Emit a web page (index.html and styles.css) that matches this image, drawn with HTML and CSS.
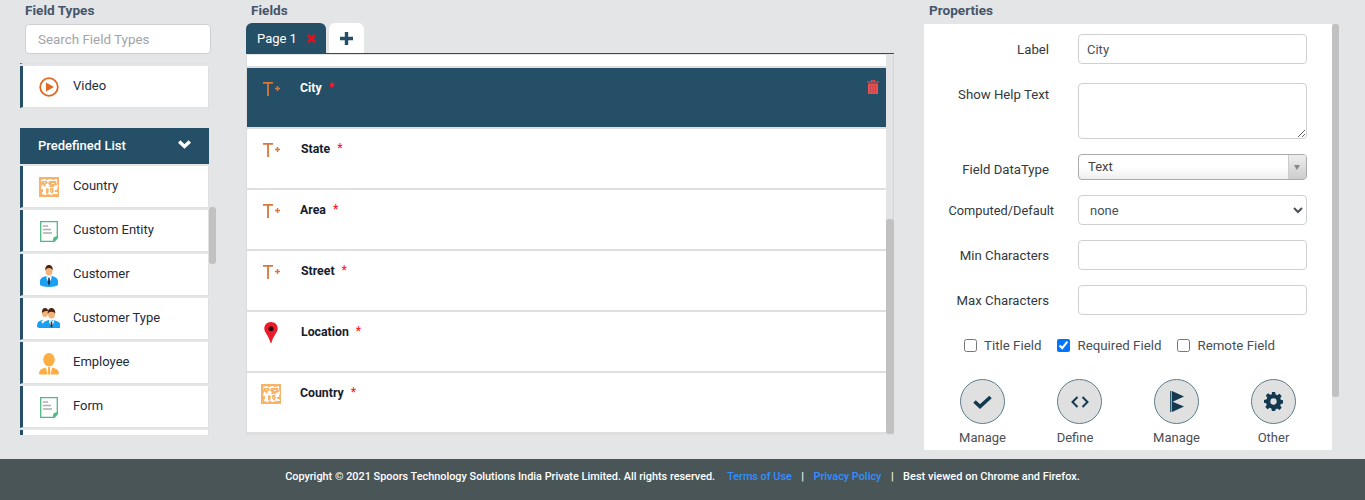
FILE: index.html
```html
<!DOCTYPE html>
<html lang="en">
<head>
<meta charset="utf-8">
<title>Form Builder</title>
<link rel="stylesheet" href="styles.css">
</head>
<body>
<svg class="defs" aria-hidden="true">
  <symbol id="i-map" viewBox="0 0 20 20">
    <rect width="20" height="20" fill="#f9b368"/>
    <path fill="#fff" d="M2 3l3-1 3 1 3-1 3 1 4-1 0 4 1 3-1 3 0 3 1 2-4 0-3 1-3-1-3 1-3-1 0-3-1-3 1-3z"/>
    <path fill="#f9b368" d="M3 4h5l1 2-2 1-1 3-2-2-2-1zM7 11l3 1-1 5-2-1zM10 4h7l1 4-3 1-1 2-1-1-3 0 1-2-2-1zM11 11h3l1 3-2 3-2-3zM16 13h2v2h-2zM2 12h2v3H2z"/>
    <path fill="#fff" d="M5 5h1v1H5zM13 6h2v1h-2zM12 13h1v1h-1z"/>
  </symbol>
  <symbol id="i-doc" viewBox="0 0 18 21">
    <path fill="#fff" stroke="#4dbb83" stroke-width="1.300" d="M.7.7h16.600v16.300l-3 3.300H.7z"/>
    <path fill="none" stroke="#aeaeae" stroke-width="1.500" d="M3 5h5M3 8.500h8M3 12h9"/>
    <path fill="#4dbb83" d="M13 21l5-5v-1l-4 1-1 2z"/>
  </symbol>
  <symbol id="i-tplus" viewBox="0 0 17 15">
    <path fill="none" stroke="#d9763a" stroke-width="1.800" d="M0 1.900h10M5 1.900V15"/>
    <path fill="none" stroke="#d9763a" stroke-width="1.500" d="M12 7.500h5M14.500 5v5"/>
  </symbol>
</svg>

<div class="page">
  <main class="workspace">
    <section class="types">
      <h2 class="heading">Field Types</h2>
      <input class="search" type="text" placeholder="Search Field Types">
      <div class="types-view">
        <div class="types-scroll">
          <div class="type-item type-item-clipped"></div>
          <div class="type-item">
            <svg class="type-icon" width="20" height="20" viewBox="0 0 20 20"><circle cx="10" cy="10" r="8.800" fill="none" stroke="#e0691f" stroke-width="1.800"/><path fill="#e0691f" d="M7 5.500L15 10l-8 4.500z"/></svg>
            <span>Video</span>
          </div>
          <div class="group-head">
            <span>Predefined List</span>
            <svg class="group-chevron" width="13" height="9" viewBox="0 0 13 9"><path fill="none" stroke="#fff" stroke-width="3.400" d="M1.200 1.500l5.300 5 5.300-5"/></svg>
          </div>
          <div class="type-item">
            <svg class="type-icon" width="20" height="20"><use href="#i-map"/></svg>
            <span>Country</span>
          </div>
          <div class="type-item">
            <svg class="type-icon type-icon-doc" width="18" height="21"><use href="#i-doc"/></svg>
            <span>Custom Entity</span>
          </div>
          <div class="type-item">
            <svg class="type-icon type-icon-doc" width="18" height="22" viewBox="0 0 18 22">
              <path fill="#1aa0f0" d="M0 20v-3.500c0-3.500 3-4.500 6-5.500l3 1.500 3-1.500c3 1 6 2 6 5.500V20c-3 2.600-15 2.600-18 0z"/>
              <path fill="#fff" d="M6.500 11l2.500 2 2.500-2v2.500L9 18l-2.500-4.500z"/>
              <path fill="#1d3550" d="M8.300 13h1.400l.5 5-1.200 3-1.200-3z"/>
              <ellipse cx="9" cy="6" rx="3.400" ry="4.500" fill="#f2b27c"/>
              <path fill="#4a2410" d="M5.300 5.500C4.800 1.800 7 0 9 0s4.200 1.800 3.700 5.500C12 4 11.300 3 9 3S6 4 5.300 5.500z"/>
            </svg>
            <span>Customer</span>
          </div>
          <div class="type-item">
            <svg class="type-icon type-icon-pair" width="23" height="20" viewBox="0 0 23 20">
              <path fill="#1aa0f0" d="M0 19c0-4 1-6 5-7l3 3v5H2z"/>
              <ellipse cx="8" cy="5" rx="3" ry="4" fill="#f2b27c"/>
              <path fill="#4a2410" d="M5 5c-.5-3 1-5 3-5s3 1 3 3c-2 0-4 0-6 2z"/>
              <path fill="#fff" d="M4 13l4 6 3-6z"/>
              <path fill="#1aa0f0" d="M6 20v-4c0-2 2-3 6-4l2 1 2-1c4 1 7 2 7 4v4z"/>
              <path fill="#fff" d="M12 12l2.500 2 2.500-2v2l-2.500 5-2.500-5z"/>
              <path fill="#1d3550" d="M13.800 14h1.400l.4 4-1.100 2-1.100-2z"/>
              <ellipse cx="14.500" cy="6" rx="3.500" ry="4.500" fill="#f2b27c"/>
              <path fill="#4a2410" d="M10.800 6c-.5-4 1.700-6 3.700-6s4.200 2 3.700 6c-.7-1.500-1.500-2.300-3.700-2.300S11.500 4.500 10.800 6z"/>
            </svg>
            <span>Customer Type</span>
          </div>
          <div class="type-item">
            <svg class="type-icon" width="20" height="22" viewBox="0 0 20 22">
              <ellipse cx="10" cy="6.800" rx="5.800" ry="6.800" fill="#fdae42"/>
              <path fill="#fdae42" d="M0 21c0-3.500 2-5.500 7-6.500l1.300 7H1.500zM20 21c0-3.500-2-5.500-7-6.500l-1.300 7h6.800z"/>
              <path fill="#fdae42" d="M9.100 14h1.800l.5 7.500H8.600z"/>
            </svg>
            <span>Employee</span>
          </div>
          <div class="type-item">
            <svg class="type-icon type-icon-doc" width="18" height="21"><use href="#i-doc"/></svg>
            <span>Form</span>
          </div>
          <div class="type-item"></div>
        </div>
        <div class="thumb types-thumb"></div>
      </div>
    </section>

    <section class="fields">
      <h2 class="heading">Fields</h2>
      <div class="tabs">
        <div class="tab tab-active">
          <span>Page 1</span>
          <svg width="9" height="9" viewBox="0 0 9 9"><path fill="none" stroke="#e0131a" stroke-width="2.600" d="M1 1l7 7M8 1L1 8"/></svg>
        </div>
        <div class="tab tab-add">
          <svg width="13" height="13" viewBox="0 0 13 13"><path fill="none" stroke="#254f66" stroke-width="3.400" d="M0 6.500h13M6.500 0v13"/></svg>
        </div>
      </div>
      <div class="field-view">
        <div class="field-list">
          <div class="field-stub"></div>
          <div class="field-row field-row-active">
            <span class="field-icon field-icon-t"><svg width="17" height="15"><use href="#i-tplus"/></svg></span>
            <span class="field-name">City</span><span class="req">*</span>
            <svg class="trash" width="12" height="14" viewBox="0 0 12 14">
              <path fill="#ea5050" d="M4 0h4v1.500h4v1H0v-1h4zM5 .8v.7h2V.8zM1 3.500h10V14H1z"/>
              <path fill="none" stroke="#b84750" d="M3.500 5v8M6 5v8M8.500 5v8"/>
            </svg>
          </div>
          <div class="field-row">
            <span class="field-icon field-icon-t"><svg width="17" height="15"><use href="#i-tplus"/></svg></span>
            <span class="field-name field-name-shift">State</span><span class="req">*</span>
          </div>
          <div class="field-row">
            <span class="field-icon field-icon-t"><svg width="17" height="15"><use href="#i-tplus"/></svg></span>
            <span class="field-name">Area</span><span class="req">*</span>
          </div>
          <div class="field-row">
            <span class="field-icon field-icon-t"><svg width="17" height="15"><use href="#i-tplus"/></svg></span>
            <span class="field-name field-name-shift">Street</span><span class="req">*</span>
          </div>
          <div class="field-row">
            <span class="field-icon field-icon-pin"><svg width="14" height="21" viewBox="0 0 14 21"><path fill="#ea1c2b" d="M7 0c3.800 0 6.700 2.800 6.700 6.500 0 4-4.500 7-6.300 14.500h-.8C4.800 13.500.3 10.500.3 6.500.3 2.800 3.200 0 7 0z"/><circle cx="7" cy="6.800" r="2.500" fill="#2a0a0c"/></svg></span>
            <span class="field-name field-name-shift">Location</span><span class="req">*</span>
          </div>
          <div class="field-row">
            <span class="field-icon"><svg width="20" height="20"><use href="#i-map"/></svg></span>
            <span class="field-name">Country</span><span class="req">*</span>
          </div>
        </div>
        <div class="field-track"><div class="thumb field-thumb"></div></div>
      </div>
    </section>

    <section class="props">
      <h2 class="heading">Properties</h2>
      <div class="props-view">
        <form class="props-panel">
          <div class="prop-row prop-row-first">
            <label class="prop-label">Label</label>
            <input class="control" type="text" value="City">
          </div>
          <div class="prop-row prop-row-top">
            <label class="prop-label">Show Help Text</label>
            <textarea class="control control-area"></textarea>
          </div>
          <div class="prop-row">
            <label class="prop-label prop-label-low">Field DataType</label>
            <div class="combo"><span class="combo-text">Text</span><span class="combo-arrow"></span></div>
          </div>
          <div class="prop-row">
            <label class="prop-label prop-label-wide">Computed/Default</label>
            <select class="control control-select"><option>none</option></select>
          </div>
          <div class="prop-row">
            <label class="prop-label">Min Characters</label>
            <input class="control" type="text">
          </div>
          <div class="prop-row">
            <label class="prop-label">Max Characters</label>
            <input class="control" type="text">
          </div>
          <div class="checks">
            <label class="check"><input type="checkbox">Title Field</label>
            <label class="check"><input type="checkbox" checked>Required Field</label>
            <label class="check"><input type="checkbox">Remote Field</label>
          </div>
          <div class="actions">
            <div class="action">
              <span class="action-btn"><svg width="19" height="14" viewBox="0 0 19 14"><path fill="none" stroke="#12394f" stroke-width="3.600" d="M1.500 6.500l5.500 5L17.500 2"/></svg></span>
              <span class="action-label">Manage</span>
            </div>
            <div class="action">
              <span class="action-btn"><svg width="18" height="12" viewBox="0 0 18 12"><path fill="none" stroke="#12394f" stroke-width="2" d="M6.500 1L1.500 6l5 5M11.500 1l5 5-5 5"/></svg></span>
              <span class="action-label action-label-left">Define</span>
            </div>
            <div class="action">
              <span class="action-btn"><svg width="14" height="21" viewBox="0 0 14 21"><path fill="none" stroke="#2d5a70" stroke-width="1.400" d="M.7 0v21"/><path fill="#12394f" d="M2 0l12 5.500L2 11zM2 10.500l12 5L2 21z"/></svg></span>
              <span class="action-label">Manage</span>
            </div>
            <div class="action">
              <span class="action-btn"><svg width="19" height="19" viewBox="0 0 24 24"><path fill="#12394f" fill-rule="evenodd" d="M10 0h4l.7 3.300 2 .8L19.500 2.300l2.800 2.800-1.800 2.800.8 2 3.300.7v3.800l-3.300.7-.8 2 1.800 2.800-2.800 2.800-2.800-1.800-2 .8L14 24h-4l-.7-3.300-2-.8-2.800 1.800-2.800-2.800 1.800-2.800-.8-2L0 13.500V10l3.300-.7.800-2-1.800-2.800 2.800-2.800 2.800 1.800 2-.8zM12 8a4 4 0 1 0 0 8 4 4 0 0 0 0-8z"/></svg></span>
              <span class="action-label">Other</span>
            </div>
          </div>
        </form>
        <div class="thumb props-thumb"></div>
      </div>
    </section>
  </main>

  <footer class="footer">
    <span class="footer-copy">Copyright © 2021 Spoors Technology Solutions India Private Limited. All rights reserved.</span>
    <a class="footer-link footer-link-first" href="#">Terms of Use</a>
    <span class="footer-sep">|</span>
    <a class="footer-link" href="#">Privacy Policy</a>
    <span class="footer-sep">|</span>
    <span>Best viewed on Chrome and Firefox.</span>
  </footer>
</div>
</body>
</html>
```

FILE: styles.css
```css
* { box-sizing: border-box; }

html, body {
  margin: 0;
  height: 500px;
  overflow: hidden;
}

body {
  background: #e4e5e7;
  font-family: Roboto, "Liberation Sans", sans-serif;
  font-size: 13px;
  color: #212529;
}

.defs { position: absolute; width: 0; height: 0; }

.page { display: flex; flex-direction: column; height: 500px; }

.workspace {
  flex: 0 0 459px;
  display: flex;
  gap: 30px;
  padding-left: 20px;
  overflow: hidden;
}

.heading {
  margin: 0 0 3px 5px;
  font-size: 13.6px;
  line-height: 21px;
  font-weight: 700;
  color: #46566a;
}

.thumb {
  position: absolute;
  background: #c1c1c1;
  border-radius: 3px;
}

/* Field types */
.types { width: 196px; flex: none; }

.search {
  display: block;
  width: 186px;
  height: 30px;
  margin: 0 0 9px 5px;
  padding: 0 12px;
  background: #fff;
  border: 1px solid #ced0d2;
  border-radius: 4px;
  font: 13.400px Roboto, sans-serif;
  outline: none;
}
.search::placeholder { color: #a2a4a8; opacity: 1; }

.types-view { position: relative; height: 372px; }
.types-scroll { width: 189px; height: 372px; overflow: hidden; }

.type-item {
  display: flex;
  align-items: flex-start;
  width: 189px;
  height: 42px;
  margin-bottom: 2px;
  padding: 11px 0 0 16px;
  background: #fff;
  border-left: 3px solid #254f66;
  border-right: 1px solid #e0e0e0;
  border-bottom: 1px solid #e0e1e2;
  line-height: 17px;
  color: #1f2b3a;
}
.type-item-clipped { margin-top: -41px; }
.type-item span { margin-left: 14px; }
.type-icon { flex: none; }
.type-icon-doc { margin: 0 1px; }
.type-icon-pair { margin: -1px 0 0 -2px; }
.type-item .type-icon-pair + span { margin-left: 13px; }

.group-head {
  display: flex;
  align-items: center;
  justify-content: space-between;
  height: 36px;
  margin: 20px 0 2px;
  padding: 0 18px 2px;
  background: #254f66;
  color: #fff;
  font-weight: 500;
  font-size: 13px;
}
.group-chevron { margin-bottom: 1px; }

.types-thumb { left: 189px; top: 144px; width: 7px; height: 57px; }

/* Fields */
.fields { width: 648px; flex: none; }

.tabs {
  display: flex;
  gap: 3px;
  height: 31px;
  margin-top: -1px;
  border-bottom: 1px solid #254f66;
}

.tab {
  display: flex;
  align-items: center;
  height: 30px;
  border-radius: 6px 6px 0 0;
}
.tab-active {
  width: 80px;
  padding-left: 11px;
  gap: 10px;
  background: #254f66;
  color: #fff;
  font-size: 13px;
}
.tab-add { width: 35px; justify-content: center; background: #fff; }

.field-view {
  display: flex;
  height: 381px;
  margin-top: 1px;
  border-left: 1px solid #dcdcdc;
}

.field-list {
  flex: 0 0 639px;
  height: 380px;
  background: #dfdfdf;
}

.field-stub { height: 11px; background: #fff; margin-bottom: 2px; }

.field-row {
  display: flex;
  align-items: flex-start;
  height: 59px;
  margin-bottom: 2px;
  padding: 11px 7px 0 14px;
  background: #fff;
  color: #16202e;
}
.field-row-active { background: #254f66; color: #fff; }

.field-icon { flex: 0 0 20px; display: flex; justify-content: center; }
.field-icon svg { display: block; }
.field-icon-t { padding-top: 2px; margin-right: 0; }
.field-icon-pin { margin-top: -1px; }

.field-name {
  margin-left: 19px;
  padding-top: 1px;
  font-size: 12.300px;
  font-weight: 700;
  line-height: 17px;
}
.field-name-shift { margin-left: 20px; }

.req {
  margin-left: 7px;
  padding-top: 1px;
  color: #ff1a2a;
  font-size: 12px;
  font-weight: 500;
  line-height: 15px;
}

.trash { margin-left: auto; margin-top: 1px; }

.field-track {
  position: relative;
  flex: 0 0 8px;
  background: #e2e3e5;
  border-right: 1px solid #d4d5d7;
}
.field-thumb { left: 0; top: 164px; width: 8px; height: 215px; }

/* Properties */
.props { width: 415px; flex: none; }

.props-view { position: relative; height: 426px; }

.props-thumb { left: 408px; top: 0; width: 7px; height: 373px; }

.props-panel {
  display: flex;
  flex-direction: column;
  gap: 15px;
  width: 408px;
  height: 426px;
  padding-top: 10px;
  background: #fff;
  overflow: hidden;
}

.prop-row { display: flex; align-items: center; }
.prop-row-first { margin-bottom: 4px; }
.prop-row-top { align-items: flex-start; }
.prop-row-top .prop-label { padding-top: 3px; }

.prop-label {
  flex: 0 0 125px;
  margin-right: 29px;
  padding-top: 2px;
  text-align: right;
  line-height: 18px;
  font-size: 13.200px;
  color: #33383d;
  white-space: nowrap;
}
.prop-label-low { padding-top: 6px; }
.prop-label-wide { flex-basis: 130px; margin-right: 24px; font-size: 12.800px; }

.control {
  display: block;
  flex: 0 0 229px;
  width: 229px;
  height: 30px;
  padding: 0 8px;
  background: #fff;
  border: 1px solid #ced0d2;
  border-radius: 4px;
  font: 13px Roboto, sans-serif;
  color: #495057;
  outline: none;
}
.control-area { height: 56px; }
.control-select { padding: 0 7px; }

.combo {
  display: flex;
  flex: 0 0 229px;
  height: 26px;
  border: 1px solid #aaa;
  border-radius: 4px;
  background: linear-gradient(#fff 50%, #eee);
}
.combo-text { flex: 1; padding-left: 9px; line-height: 23px; color: #444; }
.combo-arrow {
  flex: 0 0 18px;
  position: relative;
  border-left: 1px solid #ccc;
  background: linear-gradient(#eee, #ccc);
  border-radius: 0 3px 3px 0;
}
.combo-arrow::after {
  content: "";
  position: absolute;
  left: 5px;
  top: 10px;
  border: 3.5px solid transparent;
  border-top: 5px solid #888;
}

.checks {
  display: flex;
  gap: 16px;
  height: 20px;
  margin-top: 5px;
  padding-left: 40px;
  font-size: 13.300px;
}
.check {
  display: flex;
  align-items: center;
  gap: 7px;
  color: #4a4f54;
  white-space: nowrap;
}
.check input { width: 13px; height: 13px; margin: 0; }

.actions { display: flex; margin-top: 9px; padding-left: 10px; }

.action {
  flex: 0 0 97px;
  display: flex;
  flex-direction: column;
  align-items: center;
  gap: 5px;
}

.action-btn {
  display: flex;
  align-items: center;
  justify-content: center;
  width: 45px;
  height: 45px;
  background: #e0e0e0;
  border: 1px solid #5d7d8c;
  border-radius: 50%;
}

.action-label { font-size: 13px; line-height: 17px; color: #4a4f54; }
.action-label-left { margin-right: 9px; }

/* Footer */
.footer {
  flex: 0 0 41px;
  display: flex;
  align-items: center;
  justify-content: center;
  padding-bottom: 7px;
  background: #4a5558;
  color: #fff;
  font-size: 11px;
  font-weight: 500;
}
.footer-copy { font-size: 10.880px; }
.footer-link { color: #3390ff; text-decoration: none; font-size: 10.850px; }
.footer-link-first { margin-left: 12px; }
.footer-sep { margin: 0 9.500px; }
```
